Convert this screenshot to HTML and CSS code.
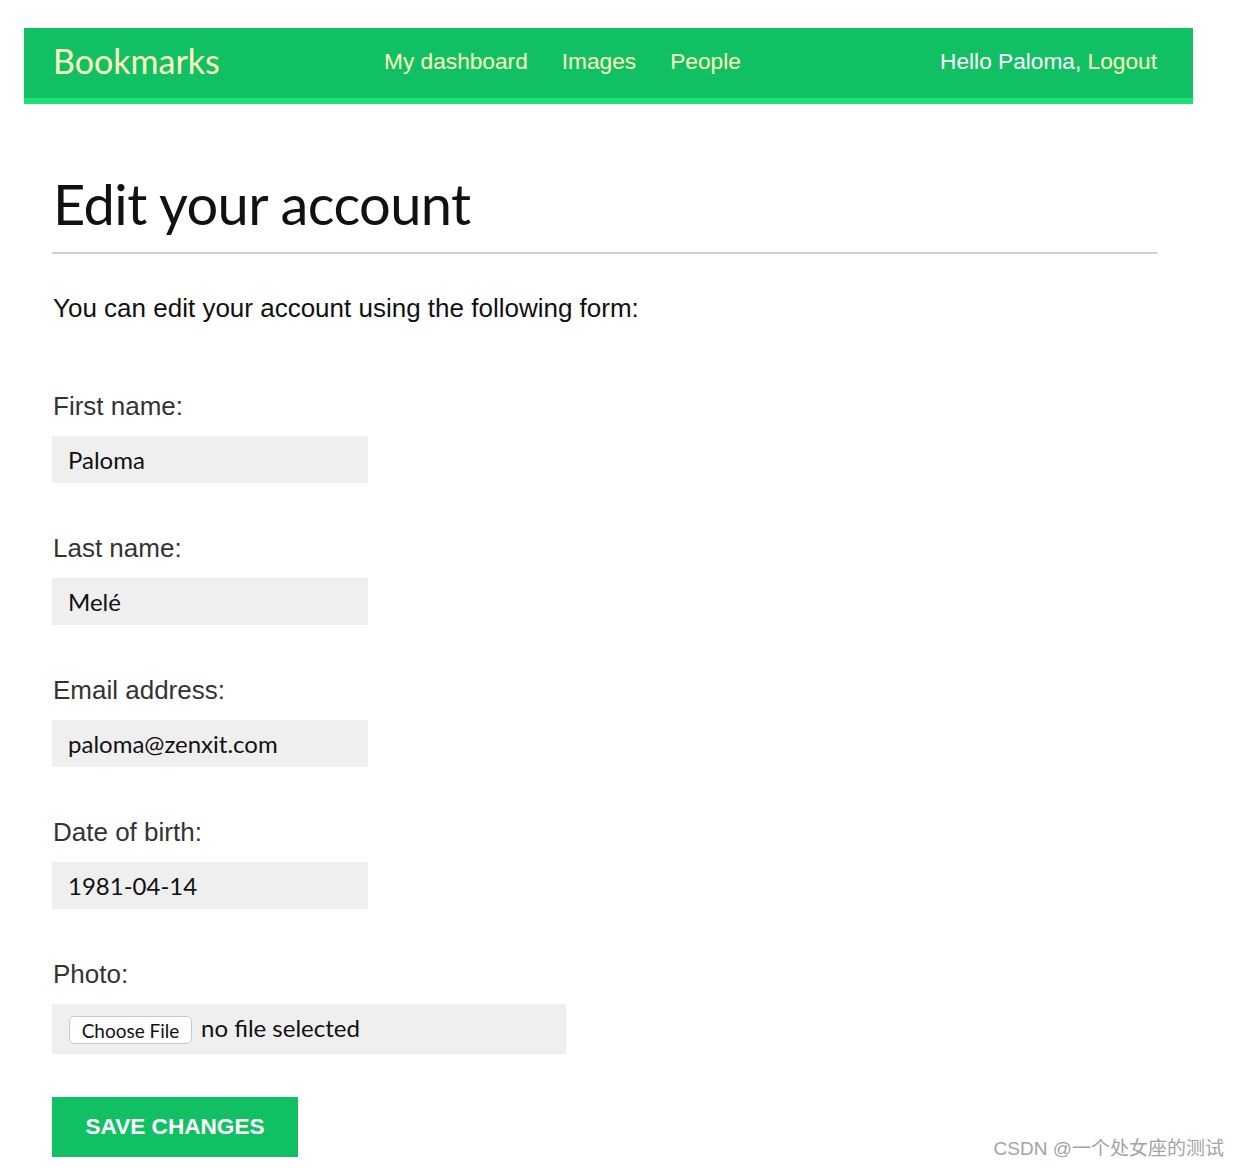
FILE: index.html
```html
<!DOCTYPE html>
<html lang="en">
<head>
<meta charset="utf-8">
<title>Edit your account</title>
<link rel="stylesheet" href="styles.css">
</head>
<body>
<div class="page">
  <header class="header">
    <a class="logo" href="#">Bookmarks</a>
    <nav class="menu">
      <a href="#">My dashboard</a>
      <a href="#">Images</a>
      <a href="#">People</a>
    </nav>
    <div class="user">Hello Paloma, <a href="#">Logout</a></div>
  </header>

  <main class="content">
    <h1 class="title">Edit your account</h1>
    <p class="intro">You can edit your account using the following form:</p>
    <form class="form">
      <div class="field">
        <label class="label" for="first">First name:</label>
        <input class="input" id="first" type="text" value="Paloma">
      </div>
      <div class="field">
        <label class="label" for="last">Last name:</label>
        <input class="input" id="last" type="text" value="Melé">
      </div>
      <div class="field">
        <label class="label" for="email">Email address:</label>
        <input class="input" id="email" type="text" value="paloma@zenxit.com">
      </div>
      <div class="field">
        <label class="label" for="dob">Date of birth:</label>
        <input class="input" id="dob" type="text" value="1981-04-14">
      </div>
      <div class="field">
        <span class="label">Photo:</span>
        <div class="file-box">
          <button class="file-btn" type="button">Choose File</button>
          <span class="file-text">no file selected</span>
        </div>
      </div>
      <button class="save" type="button">Save changes</button>
    </form>
  </main>
  <div class="watermark">CSDN @一个处女座的测试</div>
</div>
</body>
</html>
```
FILE: styles.css
```css
html, body {
  margin: 0;
  padding: 0;
  background: #ffffff;
}
body {
  font-family: "Liberation Sans", Arial, sans-serif;
  color: #111;
  overflow: hidden;
}
.page {
  position: relative;
  box-sizing: border-box;
  width: 1240px;
  height: 1168px;
  padding-top: 28px;
}
.header {
  box-sizing: border-box;
  margin: 0 0 0 24px;
  width: 1169px;
  height: 76px;
  background: #12c064;
  border-bottom: 6px solid #1de079;
  display: flex;
  align-items: flex-start;
  padding: 0 36px 0 29px;
}
.header a {
  color: #fcfcc0;
  text-decoration: none;
}
.logo {
  font-family: "Lato", "Noto Sans", sans-serif;
  font-size: 34px;
  line-height: 40px;
  margin-top: 13px;
  width: 331px;
  flex: none;
}
.menu {
  display: flex;
  gap: 34px;
  font-size: 22.7px;
  line-height: 26px;
  margin-top: 20px;
}
.user {
  margin-left: auto;
  margin-top: 20px;
  font-size: 22.7px;
  line-height: 26px;
  color: #ffffff;
}
.content {
  margin: 0 83px 0 52px;
}
.title {
  font-family: "Lato", "Noto Sans", sans-serif;
  font-weight: 400;
  font-size: 56px;
  letter-spacing: -0.6px;
  line-height: 60px;
  color: #111;
  margin: 70px 0 0 0;
  padding: 0 0 18px 1px;
  border-bottom: 2px solid #d0d0d0;
}
.intro {
  margin: 39px 0 0 0;
  font-size: 26px;
  line-height: 30px;
  color: #111;
  padding-left: 1px;
}
.form {
  margin-top: 68px;
}
.field {
  display: flex;
  flex-direction: column;
  align-items: flex-start;
  gap: 15px;
  margin-bottom: 50px;
}
.label {
  font-size: 26px;
  line-height: 30px;
  color: #333;
  padding-left: 1px;
}
.input {
  box-sizing: border-box;
  width: 316px;
  height: 47px;
  border: 0;
  margin: 0;
  padding: 0 16px;
  background: #efefef;
  font-family: "Lato", "Noto Sans", sans-serif;
  font-size: 24px;
  color: #111;
  outline: none;
}
.file-box {
  box-sizing: border-box;
  width: 514px;
  height: 50px;
  background: #efefef;
  display: flex;
  align-items: center;
  padding: 0 17px;
  gap: 9px;
}
.file-btn {
  box-sizing: border-box;
  height: 28px;
  width: 123px;
  margin: 2px 0 0 0;
  padding: 0;
  border: 1px solid #c8c8c8;
  border-radius: 5px;
  background: #ffffff;
  font-family: "Lato", "Noto Sans", sans-serif;
  font-size: 19px;
  color: #111;
}
.file-text {
  font-family: "Lato", "Noto Sans", sans-serif;
  font-size: 24px;
  color: #111;
  margin-top: -4px;
}
.save {
  margin-top: -7px;
  box-sizing: border-box;
  width: 246px;
  height: 60px;
  border: 0;
  padding: 0;
  background: #12c064;
  color: #ffffff;
  font-family: "Liberation Sans", Arial, sans-serif;
  font-weight: 700;
  font-size: 22.6px;
  text-transform: uppercase;
}
.watermark {
  position: absolute;
  right: 16px;
  top: 1138px;
  font-family: "Liberation Sans", "Noto Sans CJK SC", sans-serif;
  font-size: 19px;
  line-height: 22px;
  color: #a3a3a3;
}
```
